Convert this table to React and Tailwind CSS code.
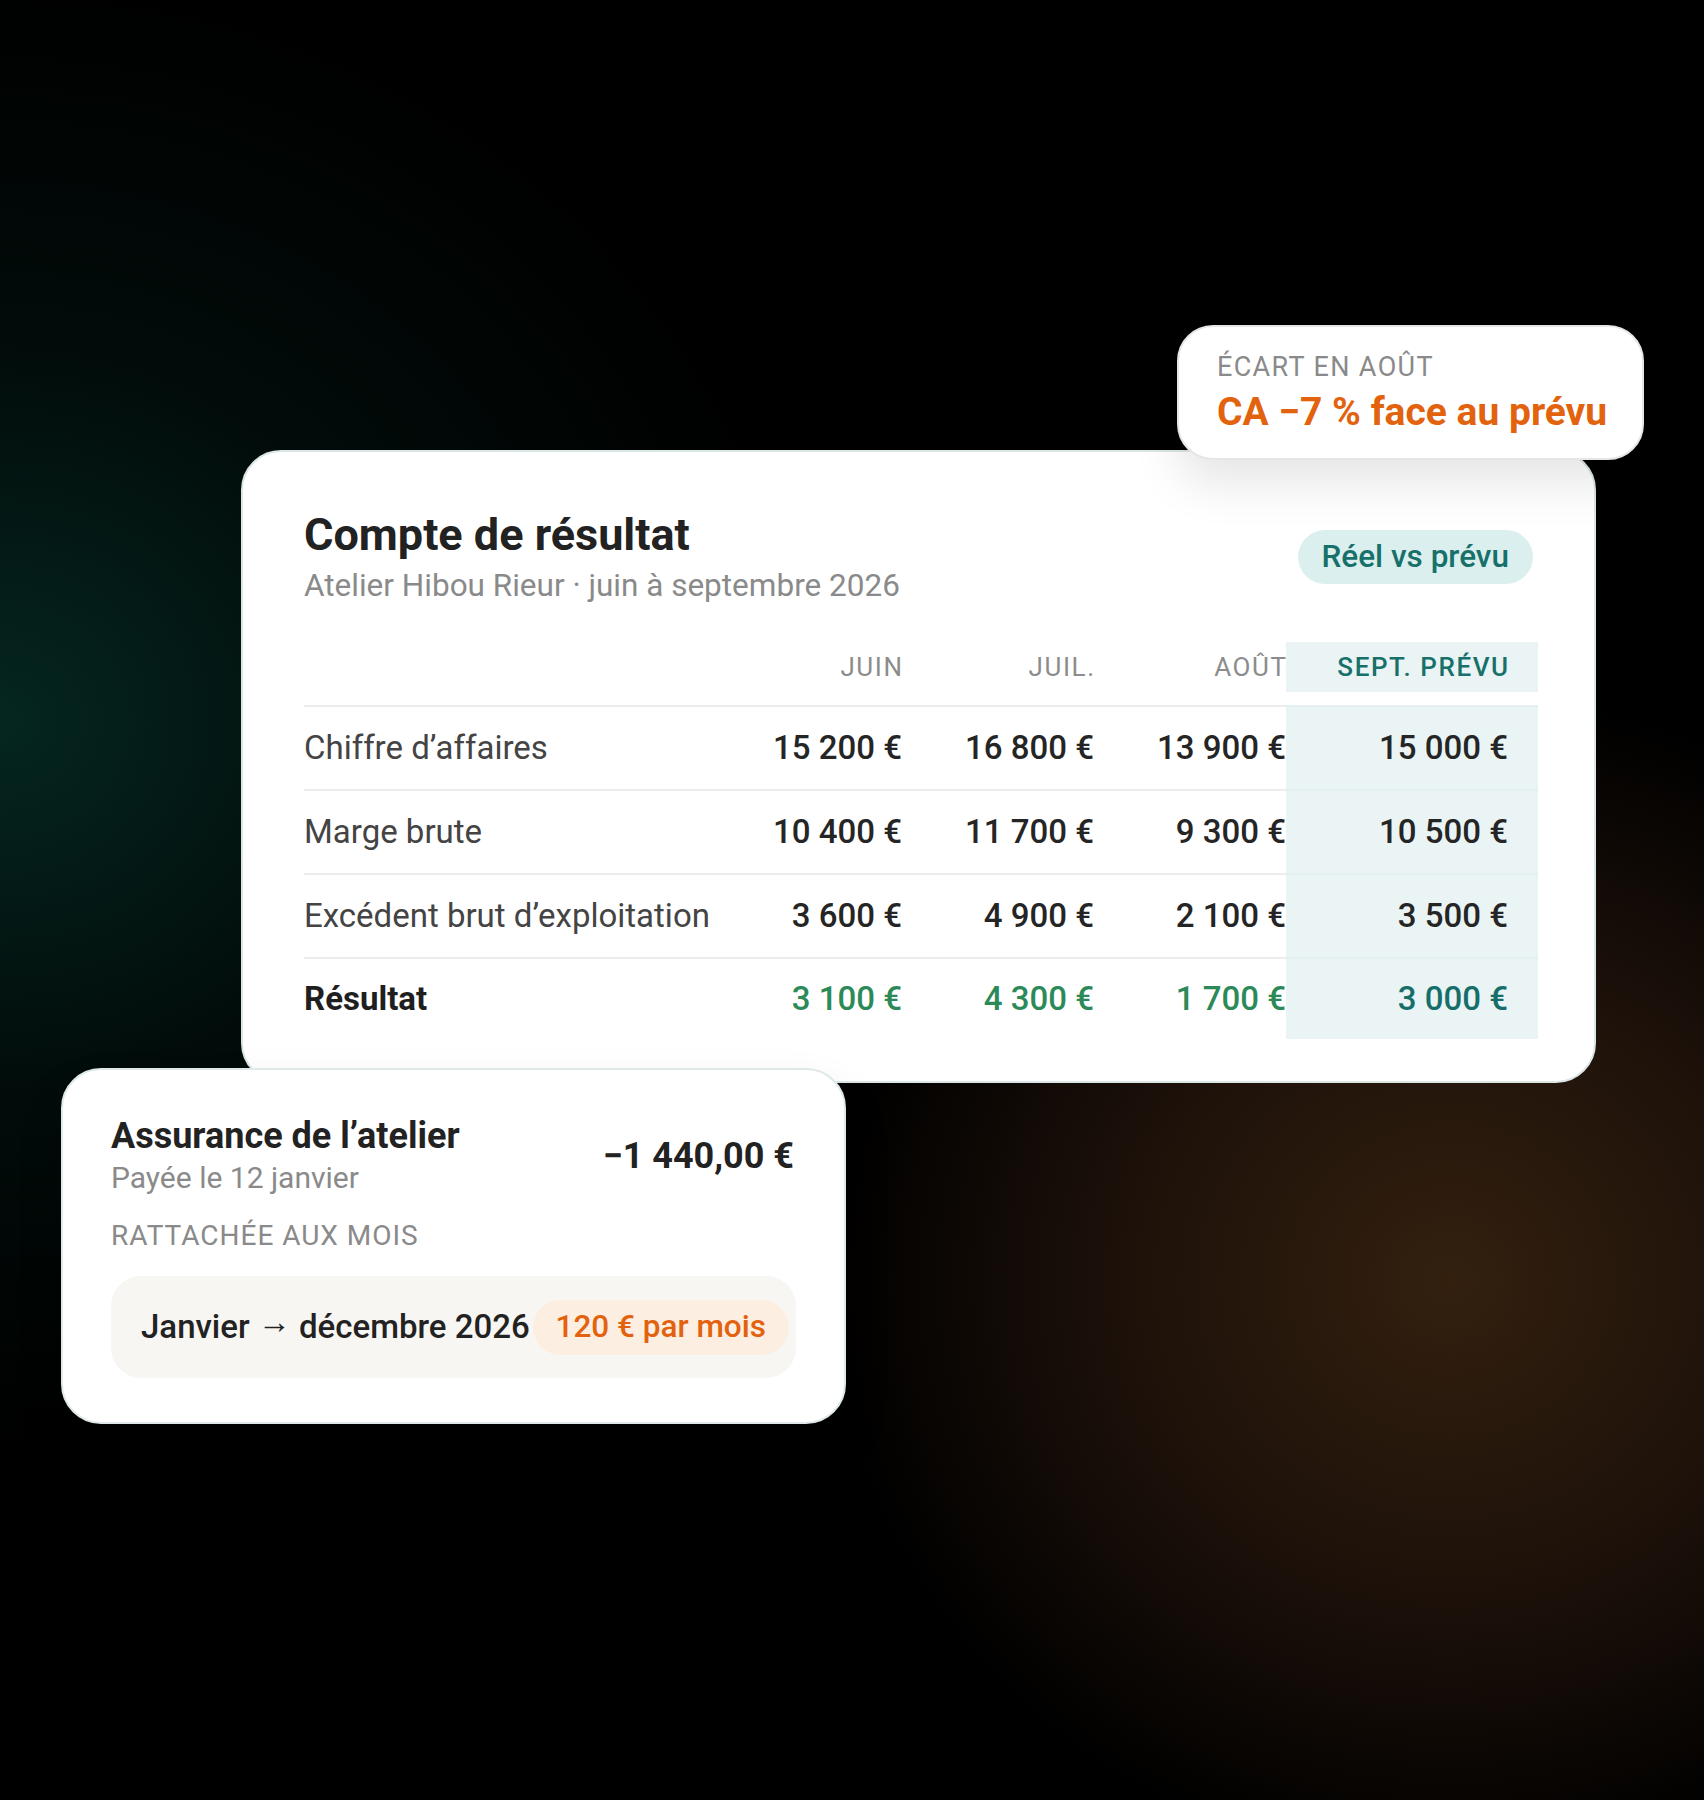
import React from "react";

const rows = [
  { label: "Chiffre d’affaires", v: ["15 200 €", "16 800 €", "13 900 €"], p: "15 000 €" },
  { label: "Marge brute", v: ["10 400 €", "11 700 €", "9 300 €"], p: "10 500 €" },
  { label: "Excédent brut d’exploitation", v: ["3 600 €", "4 900 €", "2 100 €"], p: "3 500 €" },
];

function MainCard() {
  return (
    <div className="w-[1355px] rounded-[40px] border-2 border-[#dbe6e6] bg-white pt-[56px] pb-[42px] pl-[61px] pr-[56px]">
      <div className="flex items-center justify-between">
        <div>
          <div className="text-[45px] leading-[54px] font-bold text-[#222222]">Compte de résultat</div>
          <div className="mt-[4px] text-[31.5px] leading-[40px] text-[#8a8a8a]">Atelier Hibou Rieur · juin à septembre 2026</div>
        </div>
        <div className="mr-[5px] flex h-[54px] items-center rounded-full bg-[#dcefef] px-[24px] text-[31.5px] font-medium text-[#17706a]">
          Réel vs prévu
        </div>
      </div>

      <div className="mt-[36px] grid grid-cols-[406px_192px_192px_192px_252px] h-[50px] text-[26px] tracking-[0.06em]">
        <div />
        <div className="flex items-center justify-end text-[#8c8c8c]"><span className="mr-[-0.06em]">JUIN</span></div>
        <div className="flex items-center justify-end text-[#8c8c8c]"><span className="mr-[-0.06em]">JUIL.</span></div>
        <div className="flex items-center justify-end text-[#8c8c8c]"><span className="mr-[-0.06em]">AOÛT</span></div>
        <div className="flex items-center justify-end bg-[#eaf4f4] pr-[30px] font-medium text-[#17706a]"><span className="mr-[-0.06em]">SEPT. PRÉVU</span></div>
      </div>
      <div className="h-[13px]" />

      {rows.map((r) => (
        <div key={r.label} className="grid grid-cols-[406px_192px_192px_192px_252px] h-[84px] text-[33px]">
          <div className="flex items-center border-t-2 border-[#ececec] text-[#444444]">{r.label}</div>
          {r.v.map((x, i) => (
            <div key={i} className="flex items-center justify-end border-t-2 border-[#ececec] font-medium text-[#252525]">{x}</div>
          ))}
          <div className="flex items-center justify-end border-t-2 border-[#e4f0f0] bg-[#eaf4f4] pr-[30px] font-medium text-[#252525]">{r.p}</div>
        </div>
      ))}
      <div className="grid grid-cols-[406px_192px_192px_192px_252px] h-[82px] text-[33px]">
        <div className="flex items-center border-t-2 border-[#ececec] font-bold text-[#1f1f1f]">Résultat</div>
        {["3 100 €", "4 300 €", "1 700 €"].map((x, i) => (
          <div key={i} className="flex items-center justify-end border-t-2 border-[#ececec] font-medium text-[#2b8a57]">{x}</div>
        ))}
        <div className="flex items-center justify-end border-t-2 border-[#e4f0f0] bg-[#eaf4f4] pr-[30px] font-medium text-[#166e6b]">3 000 €</div>
      </div>
    </div>
  );
}

function Badge() {
  return (
    <div className="absolute left-[1177px] top-[325px] w-[467px] h-[135px] rounded-[36px] border-2 border-[#e6e6e6] bg-white pl-[38px] pt-[24px] shadow-[0_24px_48px_rgba(0,0,0,0.10)]">
      <div className="text-[27px] leading-[32px] tracking-[0.05em] text-[#8a8a8a]">ÉCART EN AOÛT</div>
      <div className="mt-[6px] text-[39px] leading-[46px] font-bold text-[#e2620e]">CA −7 % face au prévu</div>
    </div>
  );
}

function BottomCard() {
  return (
    <div className="absolute left-[61px] top-[1068px] w-[785px] h-[356px] rounded-[40px] border-2 border-[#dfe9e9] bg-white pl-[48px] pr-[48px] pt-[45px] shadow-[0_24px_48px_rgba(0,0,0,0.12)]">
      <div className="flex items-center justify-between">
        <div>
          <div className="text-[36px] leading-[43px] font-bold text-[#222222]">Assurance de l’atelier</div>
          <div className="mt-[1px] text-[30px] leading-[38px] text-[#8a8a8a]">Payée le 12 janvier</div>
        </div>
        <div className="mr-[2px] text-[36px] font-bold text-[#222222]">−1 440,00 €</div>
      </div>
      <div className="mt-[23px] text-[28px] leading-[32px] tracking-[0.035em] text-[#8a8a8a]">RATTACHÉE AUX MOIS</div>
      <div className="mt-[24px] flex h-[102px] items-center justify-between rounded-[30px] bg-[#f8f6f3] pl-[30px] pr-[7px]">
        <div className="whitespace-nowrap text-[33px] font-medium text-[#222222]">
          Janvier <span className="inline-block -translate-y-[5px]">→</span> décembre 2026
        </div>
        <div className="flex h-[55px] items-center whitespace-nowrap rounded-full bg-[#fdeee2] px-[23px] text-[31.5px] font-medium text-[#e2620e]">120 € par mois</div>
      </div>
    </div>
  );
}

export default function App() {
  return (
    <div className="relative h-[1800px] w-full overflow-hidden bg-black bg-[radial-gradient(ellipse_900px_820px_at_0px_720px,#052620_0%,#03181480_45%,transparent_90%),radial-gradient(ellipse_780px_740px_at_1450px_1280px,#33200f_0%,#1b1009_45%,transparent_80%)] font-[Roboto,sans-serif]">
      <div className="pt-[450px] pl-[241px]">
        <MainCard />
      </div>
      <Badge />
      <BottomCard />
    </div>
  );
}
